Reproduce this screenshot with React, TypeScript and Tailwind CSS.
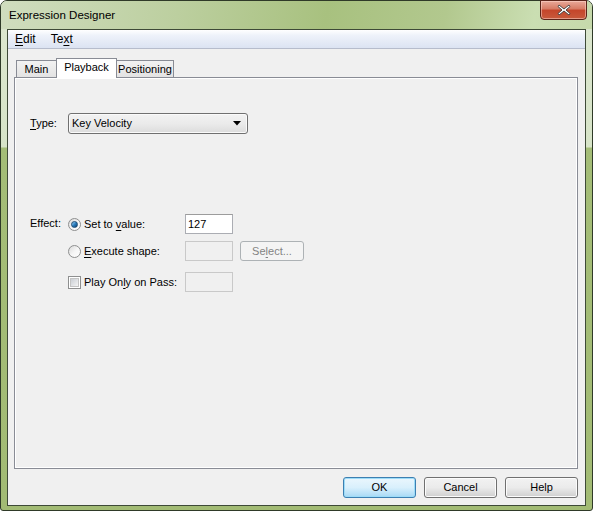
import React from "react";

const font = { fontFamily: '"Liberation Sans", Arial, sans-serif' };

function U({ children }: { children: React.ReactNode }) {
  return <span className="underline underline-offset-[2px] decoration-[1px]">{children}</span>;
}

function Radio({ checked }: { checked?: boolean }) {
  return (
    <span className="flex h-[13px] w-[13px] shrink-0 items-center justify-center rounded-full border border-[#8e8f8f] bg-gradient-to-br from-[#d9d9d9] via-[#f5f5f5] to-white">
      {checked && (
        <span className="h-[7px] w-[7px] rounded-full border border-[#1a4a73] bg-gradient-to-br from-[#9fd6f5] via-[#2a7fc0] to-[#0f3e6b]" />
      )}
    </span>
  );
}

function Check() {
  return (
    <span className="flex h-[13px] w-[13px] shrink-0 items-center justify-center border border-[#8e8f8f] bg-white">
      <span className="h-[9px] w-[9px] border border-[#c4c4c4] bg-gradient-to-br from-[#cbcfd5] to-[#f4f4f4]" />
    </span>
  );
}

function Button({ label, primary }: { label: string; primary?: boolean }) {
  return (
    <div
      className={
        "flex h-[21px] w-[73px] items-center justify-center rounded-[3px] border text-black " +
        (primary
          ? "border-[#3c7fb1] bg-gradient-to-b from-[#eaf6fd] via-[#d9f0fc] to-[#a7d9f5] shadow-[inset_0_0_0_1px_#9ddcf8]"
          : "border-[#707070] bg-gradient-to-b from-[#f2f2f2] via-[#ebebeb] to-[#cfcfcf] shadow-[inset_0_0_0_1px_#fcfcfc]")
      }
    >
      {label}
    </div>
  );
}

function Tab({ label, active, w }: { label: string; active?: boolean; w: string }) {
  return (
    <div
      className={
        "flex justify-center whitespace-nowrap border border-[#898c95] " +
        w +
        " " +
        (active
          ? "z-10 -mx-[1px] -mb-[1px] h-[20px] border-b-0 bg-white pt-[2px]"
          : "h-[17px] border-b-0 bg-gradient-to-b from-[#f2f2f2] to-[#e3e3e3] pt-[2px]")
      }
    >
      {label}
    </div>
  );
}

export default function App() {
  return (
    <div className="h-[514px] w-[594px] bg-white text-[11px] leading-[13px]" style={font}>
      <div className="flex h-[511px] w-[593px] flex-col rounded-t-[7px] rounded-b-[3px] border border-[#2f3a28] bg-[linear-gradient(to_bottom,#dce7cf_0px,#d7e4c8_146px,#a4bd77_147px,#a2bb74_100%)]">
        <div className="flex h-[28px] items-start justify-between rounded-t-[6px] bg-[linear-gradient(100deg,#d0ddbf_0%,#bccf9f_30%,#a8c17f_55%,#b2c88e_75%,#cadeb2_90%,#c6d9ab_100%)]">
          <div className="pl-[8px] pt-[8px] text-[11.5px] text-black">Expression Designer</div>
          <div className="-mt-[1px] mr-[5px] flex h-[20px] w-[47px] items-center justify-center rounded-b-[4px] border border-[#5a2419] bg-[linear-gradient(to_bottom,#e9a99a_0%,#d67a63_45%,#c4452a_50%,#c85a3c_100%)] shadow-[inset_0_0_0_1px_rgba(255,220,210,0.5)]">
            <svg width="14" height="12" viewBox="0 0 14 12">
              <path
                d="M2 1 L7 5 L12 1 L13 2.5 L9 6 L13 9.5 L12 11 L7 7 L2 11 L1 9.5 L5 6 L1 2.5 Z"
                fill="#ffffff"
                stroke="#3b3b3b"
                strokeWidth="0.9"
                strokeLinejoin="round"
              />
            </svg>
          </div>
        </div>

        <div className="mx-[6px] mb-[4px] flex flex-1 flex-col border border-[#3e4a37] bg-[#f0f0f0]">
          <div className="flex h-[19px] items-center gap-[15px] border-b border-[#b6bccc] bg-[linear-gradient(to_bottom,#ffffff_0%,#eef2fa_30%,#dbe3f2_100%)] pl-[7px] text-[12px] text-black">
            <span>
              <U>E</U>dit
            </span>
            <span>
              Te<U>x</U>t
            </span>
          </div>

          <div className="mt-[9px] flex items-end pl-[8px]">
            <Tab label="Main" w="w-[41px]" />
            <Tab label="Playback" active w="w-[61px]" />
            <Tab label="Positioning" w="w-[58px]" />
          </div>

          <div className="ml-[6px] mr-[7px] flex h-[392px] flex-col border border-[#898c95] pl-[15px] pt-[35px] text-black shadow-[inset_1px_1px_0_#ffffff,inset_-1px_-1px_0_#ffffff]">
            <div className="flex h-[21px] items-center">
              <span className="w-[38px] whitespace-nowrap">
                <U>T</U>ype:
              </span>
              <div className="flex h-[21px] w-[180px] items-center justify-between rounded-[3px] border border-[#707070] bg-gradient-to-b from-[#f2f2f2] via-[#ebebeb] to-[#dcdcdc] pl-[3px] pr-[6px] shadow-[inset_0_0_0_1px_#fafafa]">
                <span>Key Velocity</span>
                <svg width="8" height="5" viewBox="0 0 8 5">
                  <path d="M0 0 H8 L4 4.5 Z" fill="#000" />
                </svg>
              </div>
            </div>

            <div className="mt-[80px] flex">
              <span className="w-[38px] whitespace-nowrap pt-[3px]">Effect:</span>
              <div className="flex flex-col whitespace-nowrap">
                <div className="flex h-[20px] items-center">
                  <div className="flex w-[117px] items-center gap-[3px]">
                    <Radio checked />
                    <span>
                      Set to <U>v</U>alue:
                    </span>
                  </div>
                  <div className="flex h-[20px] w-[48px] items-center border border-[#abadb3] border-t-[#9c9c9c] bg-white pl-[2px]">
                    127
                  </div>
                </div>
                <div className="mt-[7px] flex h-[20px] items-center">
                  <div className="flex w-[117px] items-center gap-[3px]">
                    <Radio />
                    <span>
                      <U>E</U>xecute shape:
                    </span>
                  </div>
                  <div className="h-[20px] w-[48px] border border-[#c9c9c9] bg-[#f0f0f0]" />
                  <div className="ml-[7px] flex h-[20px] w-[64px] items-center justify-center rounded-[3px] border border-[#adb2b5] bg-[#f4f4f4] text-[#838383]">
                    Se<U>l</U>ect...
                  </div>
                </div>
                <div className="mt-[11px] flex h-[20px] items-center">
                  <div className="flex w-[117px] items-center gap-[3px]">
                    <Check />
                    <span>
                      Play On<U>l</U>y on Pass:
                    </span>
                  </div>
                  <div className="h-[20px] w-[48px] border border-[#c9c9c9] bg-[#f0f0f0]" />
                </div>
              </div>
            </div>
          </div>

          <div className="mr-[7px] mt-[8px] flex justify-end gap-[8px]">
            <Button label="OK" primary />
            <Button label="Cancel" />
            <Button label="Help" />
          </div>
        </div>
      </div>
    </div>
  );
}
